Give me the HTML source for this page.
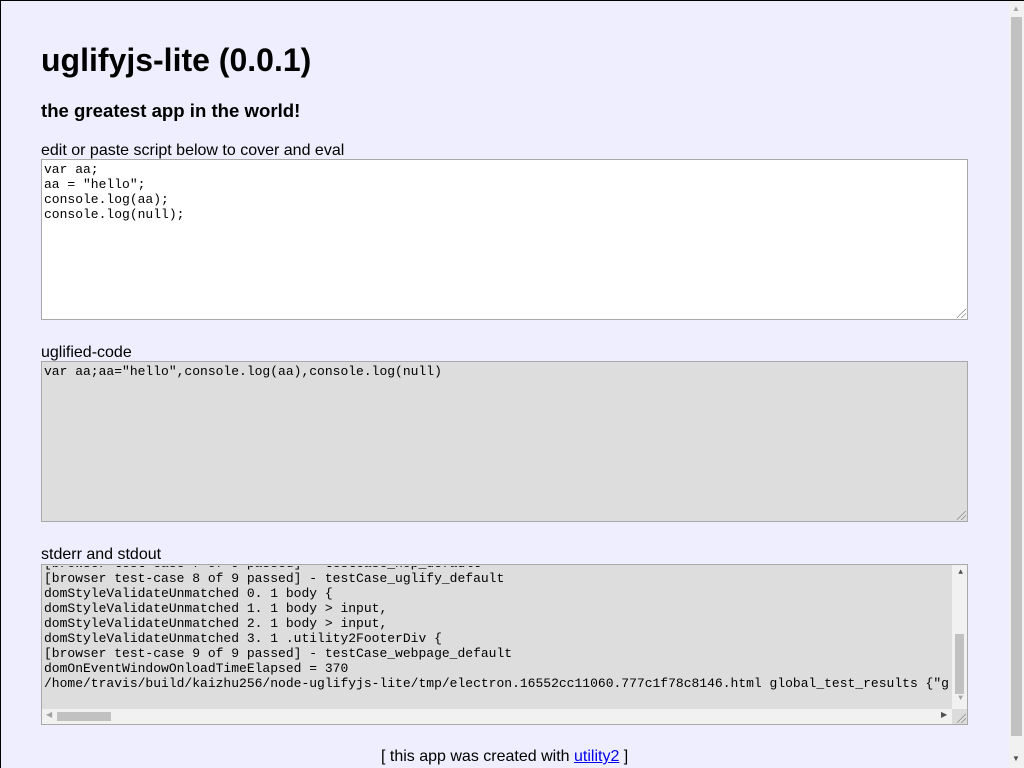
<!DOCTYPE html>
<html><head><style>
*{margin:0;padding:0;box-sizing:border-box}
html,body{width:1024px;height:768px;overflow:hidden;background:#eef}
body{position:relative;font-family:"Liberation Sans",sans-serif;color:#000;border:1px solid #000;border-bottom:none}
.a{position:absolute}
h1{position:absolute;left:40px;top:40px;font-size:32px;font-weight:bold;line-height:38px}
h2{position:absolute;left:40px;top:99px;font-size:18.6px;font-weight:bold;line-height:22px}
.lbl{position:absolute;left:40px;font-size:16px;line-height:18px}
.ta{position:absolute;left:40px;width:927px;height:161px;border:1px solid #a9a9a9;font-family:"Liberation Mono",monospace;font-size:13px;line-height:15px;padding:2px 2px;white-space:pre;overflow:hidden}
.grip{position:absolute;right:1px;bottom:1px;width:9px;height:9px;background:linear-gradient(135deg,transparent 45%,#888 45%,#888 52%,transparent 52%,transparent 70%,#888 70%,#888 77%,transparent 77%)}
</style></head><body>
<h1>uglifyjs-lite (0.0.1)</h1>
<h2>the greatest app in the world!</h2>
<div class="lbl" style="top:141px">edit or paste script below to cover and eval</div>
<div class="ta" style="top:158px;background:#fff">var aa;
aa = "hello";
console.log(aa);
console.log(null);<div class="grip"></div></div>
<div class="lbl" style="top:343px">uglified-code</div>
<div class="ta" style="top:360px;background:#ddd">var aa;aa="hello",console.log(aa),console.log(null)<div class="grip"></div></div>
<div class="lbl" style="top:545px">stderr and stdout</div>
<div class="ta" style="top:563px;background:#ddd;padding:0">
<div class="a" style="left:2px;top:-9px;width:909px;overflow:hidden;height:136px;padding-top:0">[browser test-case 7 of 9 passed] - testCase_nop_default
[browser test-case 8 of 9 passed] - testCase_uglify_default
domStyleValidateUnmatched 0. 1 body {
domStyleValidateUnmatched 1. 1 body &gt; input,
domStyleValidateUnmatched 2. 1 body &gt; input,
domStyleValidateUnmatched 3. 1 .utility2FooterDiv {
[browser test-case 9 of 9 passed] - testCase_webpage_default
domOnEventWindowOnloadTimeElapsed = 370
/home/travis/build/kaizhu256/node-uglifyjs-lite/tmp/electron.16552cc11060.777c1f78c8146.html global_test_results {"g</div>
<div class="a" style="left:0;top:0;width:911px;height:1px;background:#ddd;overflow:hidden"></div>
<div class="a" style="right:0;top:0;width:15px;height:144px;background:#f1f1f1"></div>
<div class="a" style="right:3px;top:69px;width:9px;height:60px;background:#c1c1c1"></div>
<div class="a" style="right:4px;top:4px;font-size:8px;color:#505050;line-height:8px">▲</div>
<div class="a" style="right:4px;top:130px;font-size:8px;color:#a3a3a3;line-height:8px">▼</div>
<div class="a" style="left:0;top:144px;width:910px;height:15px;background:#f1f1f1"></div>
<div class="a" style="left:15px;top:147px;width:54px;height:9px;background:#c1c1c1"></div>
<div class="a" style="left:4px;top:147px;font-size:8px;color:#a3a3a3;line-height:8px">◀</div>
<div class="a" style="left:899px;top:147px;font-size:8px;color:#505050;line-height:8px">▶</div>
<div class="a" style="right:0;top:144px;width:15px;height:15px;background:#dcdcdc"></div>
<div class="grip"></div>
</div>
<div class="a" style="left:380px;top:747px;font-size:16px;line-height:18px">[ this app was created with <span style="color:#00e;text-decoration:underline">utility2</span> ]</div>
<div class="a" style="left:1008px;top:0;width:15px;height:768px;background:#f1f1f1"></div>
<div class="a" style="left:1010px;top:16px;width:11px;height:719px;background:#c1c1c1"></div>
<div class="a" style="left:1011px;top:4px;font-size:8px;color:#a3a3a3;line-height:8px">▲</div>
<div class="a" style="left:1011px;top:754px;font-size:8px;color:#505050;line-height:8px">▼</div>
</body></html>
